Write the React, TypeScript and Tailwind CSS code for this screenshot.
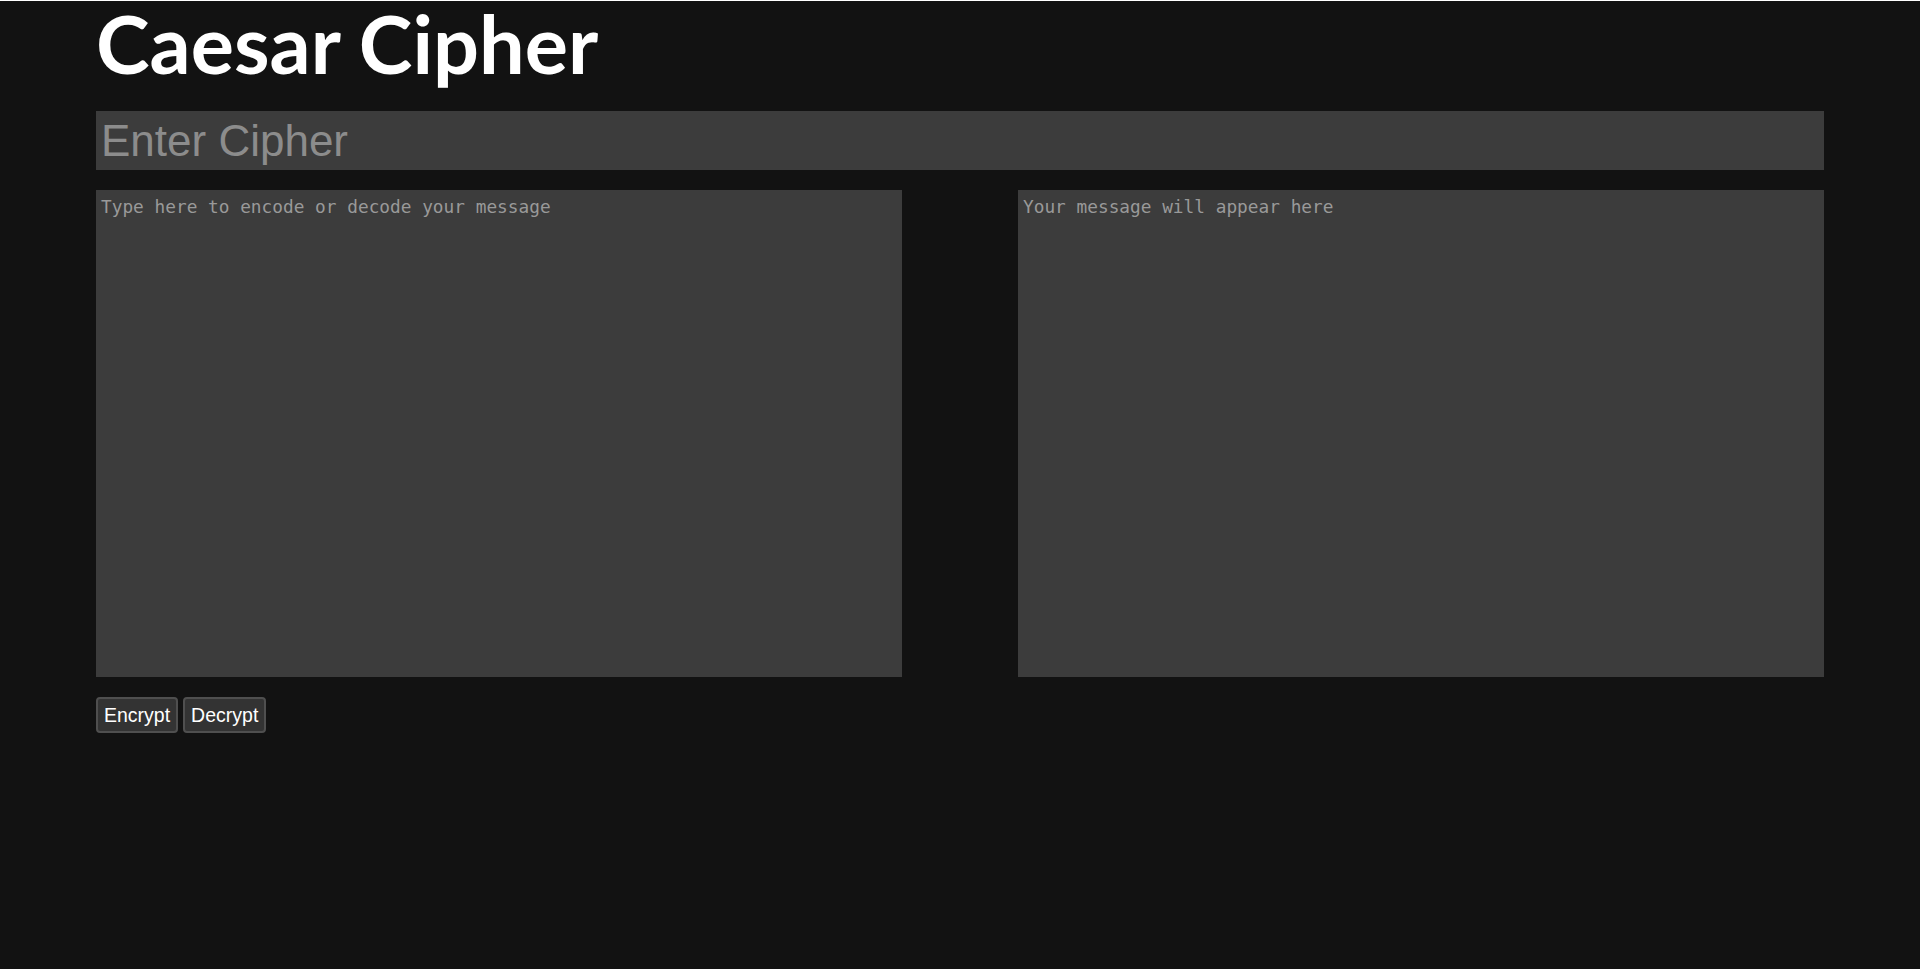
import { useState } from 'react'

function shift(text: string, key: number) {
  return text.replace(/[a-z]/gi, (ch) => {
    const base = ch <= 'Z' ? 65 : 97
    return String.fromCharCode(((((ch.charCodeAt(0) - base + key) % 26) + 26) % 26) + base)
  })
}

export default function App() {
  const [cipher, setCipher] = useState('')
  const [message, setMessage] = useState('')
  const [result, setResult] = useState('')

  const key = parseInt(cipher, 10) || 0

  return (
    <div className="h-[969px] w-[1923px] bg-white pt-px pr-[3px]">
      <div className="h-full bg-[#121212] pl-[96px] pt-px">
        <div className="w-[1728px]">
          <h1 className="font-['Lato',sans-serif] text-[81px] leading-[81px] font-bold text-white">
            Caesar Cipher
          </h1>

          <input
            type="text"
            value={cipher}
            onChange={(e) => setCipher(e.target.value)}
            placeholder="Enter Cipher"
            className="mt-[28px] block h-[59px] w-full bg-[#3c3c3c] pl-[5px] font-['Liberation_Sans',Arial,sans-serif] text-[44px] text-white outline-none placeholder:text-[#8c8c8c]"
          />

          <div className="mt-[20px] flex justify-between">
            <textarea
              value={message}
              onChange={(e) => setMessage(e.target.value)}
              placeholder="Type here to encode or decode your message"
              className="block h-[487px] w-[806px] resize-none bg-[#3c3c3c] px-[5px] pt-[4px] font-['DejaVu_Sans_Mono',monospace] text-[17.8px] text-white outline-none placeholder:text-[#999999]"
            />
            <textarea
              value={result}
              readOnly
              placeholder="Your message will appear here"
              className="block h-[487px] w-[806px] resize-none bg-[#3c3c3c] px-[5px] pt-[4px] font-['DejaVu_Sans_Mono',monospace] text-[17.8px] text-white outline-none placeholder:text-[#999999]"
            />
          </div>

          <div className="mt-[20px] flex gap-[5px]">
            <button
              type="button"
              onClick={() => setResult(shift(message, key))}
              className="rounded-[4px] border-2 border-[#4f4f4f] bg-[#333333] px-[6px] py-[4.5px] font-['Liberation_Sans',Arial,sans-serif] text-[19.5px] leading-[23px] text-white"
            >
              Encrypt
            </button>
            <button
              type="button"
              onClick={() => setResult(shift(message, -key))}
              className="rounded-[4px] border-2 border-[#4f4f4f] bg-[#333333] px-[6px] py-[4.5px] font-['Liberation_Sans',Arial,sans-serif] text-[19.5px] leading-[23px] text-white"
            >
              Decrypt
            </button>
          </div>
        </div>
      </div>
    </div>
  )
}
